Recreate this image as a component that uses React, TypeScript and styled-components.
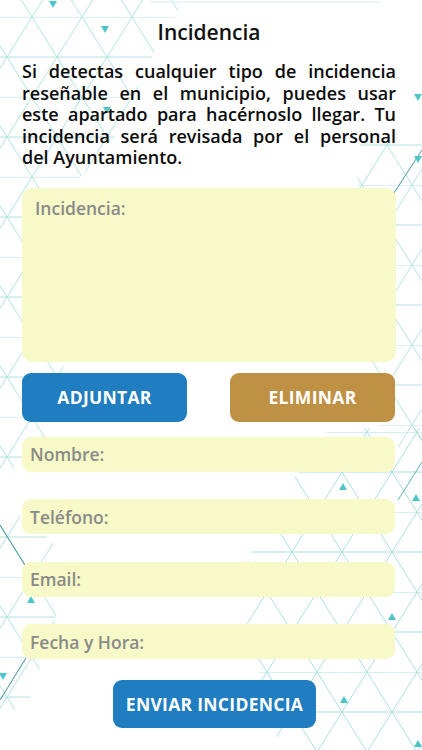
import React from "react";
import styled, { createGlobalStyle } from "styled-components";

const Global = createGlobalStyle`
  html, body { margin: 0; padding: 0; background: #ffffff; }
  body { font-family: "Open Sans", "Liberation Sans", sans-serif; }
  * { box-sizing: border-box; }
`;

const Page = styled.div`
  position: relative;
  width: 422px;
  height: 750px;
  overflow: hidden;
  background: #ffffff;
`;

const Backdrop = styled.svg`
  position: absolute;
  inset: 0;
  width: 422px;
  height: 750px;
  pointer-events: none;
`;

const Content = styled.div`
  position: relative;
  display: flex;
  flex-direction: column;
  padding: 19px 26px 0 22px;
`;

const Title = styled.h1`
  margin: 0;
  text-align: center;
  font-size: 21px;
  line-height: 26px;
  font-weight: 600;
  color: #111;
  padding-left: 0;
`;

const Intro = styled.div`
  margin-top: 16px;
  font-size: 18px;
  line-height: 21.5px;
  font-weight: 600;
  color: #0c0c0c;
`;

const Line = styled.span<{ $last?: boolean }>`
  display: block;
  white-space: nowrap;
  text-align: ${(p) => (p.$last ? "left" : "justify")};
  text-align-last: ${(p) => (p.$last ? "left" : "justify")};
`;

const TextBox = styled.div`
  margin-top: 19px;
  height: 174px;
  border-radius: 10px;
  background: #f7f9c8;
  padding: 8px 13px;
`;

const Label = styled.span`
  font-size: 17.5px;
  font-weight: 600;
  color: #8a8b88;
`;

const ButtonRow = styled.div`
  margin-top: 11px;
  display: flex;
  justify-content: space-between;
  padding-right: 1px;
`;

const Button = styled.div<{ $color: string; $w: number }>`
  width: ${(p) => p.$w}px;
  height: 49px;
  border-radius: 9px;
  background: ${(p) => p.$color};
  color: #ffffff;
  display: flex;
  align-items: center;
  justify-content: center;
  font-size: 17.5px;
  font-weight: 700;
  letter-spacing: 0.3px;
`;

const Fields = styled.div`
  margin-top: 15px;
  display: flex;
  flex-direction: column;
  gap: 27.5px;
  padding-right: 1px;
`;

const Field = styled.div`
  height: 35px;
  border-radius: 9px;
  background: #f7f9c8;
  display: flex;
  align-items: center;
  padding-left: 8px;
`;

const FieldLabel = styled.span`
  font-size: 17.5px;
  font-weight: 600;
  color: #8a8b88;
`;

const SendRow = styled.div`
  margin-top: 21px;
  display: flex;
  padding-left: 91px;
`;

const SendButton = styled(Button)`
  height: 48px;
`;

const Lattice: React.FC = () => {
  const tris: [number, number, boolean][] = [
    [53, 4, false],
    [105, 29, false],
    [107, 110, false],
    [418, 97, false],
    [418, 159, false],
    [343, 487, true],
    [416, 498, true],
    [31, 600, true],
    [392, 617, true],
    [344, 700, true],
    [418, 744, true],
    [3, 676, false],
  ];
  return (
    <Backdrop viewBox="0 0 422 750">
      <defs>
        <pattern id="latA" width="50" height="80" patternUnits="userSpaceOnUse" x="32" y="17">
          <path d="M0 0 L50 80 M50 0 L0 80 M0 0 H50 M0 40 H50" stroke="#b2e3e2" strokeWidth="1" fill="none" />
        </pattern>
        <pattern id="latB" width="50" height="80" patternUnits="userSpaceOnUse" x="17" y="32">
          <path d="M0 0 L50 80 M50 0 L0 80 M0 0 H50 M0 40 H50" stroke="#a8dfde" strokeWidth="1" fill="none" />
        </pattern>
        <pattern id="latC" width="50" height="80" patternUnits="userSpaceOnUse" x="12" y="25">
          <path d="M0 0 L50 80 M50 0 L0 80 M0 0 H50 M0 40 H50" stroke="#b2e3e2" strokeWidth="1" fill="none" />
        </pattern>
      </defs>
      <polygon points="0,0 185,0 150,60 120,130 70,190 60,460 0,470" fill="url(#latA)" />
      <polygon points="360,140 422,140 422,450 385,445 350,330" fill="url(#latC)" />
      <polygon points="330,428 422,428 422,750 280,750 250,640 240,580 265,520 300,470" fill="url(#latB)" />
      <polygon points="0,500 40,530 70,560 55,620 30,700 0,720" fill="url(#latA)" />
      <line x1="150" y1="2" x2="380" y2="2" stroke="#d5efee" strokeWidth="1" />
      <line x1="392" y1="196" x2="422" y2="150" stroke="#3e9c9d" strokeWidth="1" />
      <line x1="398" y1="500" x2="422" y2="462" stroke="#5db4b4" strokeWidth="1" />
      <line x1="0" y1="700" x2="26" y2="658" stroke="#3a8f93" strokeWidth="1" />
      <line x1="0" y1="525" x2="25" y2="565" stroke="#3a8f93" strokeWidth="1" />
      {tris.map(([x, y, up], i) => (
        <polygon
          key={i}
          points={
            up
              ? `${x - 4},${y + 3} ${x + 4},${y + 3} ${x},${y - 4}`
              : `${x - 4},${y - 3} ${x + 4},${y - 3} ${x},${y + 4}`
          }
          fill="#4ec5c7"
        />
      ))}
    </Backdrop>
  );
};

const fields = ["Nombre:", "Teléfono:", "Email:", "Fecha y Hora:"];

export default function App() {
  return (
    <Page>
      <Global />
      <Lattice />
      <Content>
        <Title>Incidencia</Title>
        <Intro>
          <Line>Si detectas cualquier tipo de incidencia</Line>
          <Line>reseñable en el municipio, puedes usar</Line>
          <Line>este apartado para hacérnoslo llegar. Tu</Line>
          <Line>incidencia será revisada por el personal</Line>
          <Line $last>del Ayuntamiento.</Line>
        </Intro>
        <TextBox>
          <Label>Incidencia:</Label>
        </TextBox>
        <ButtonRow>
          <Button $color="#1f7dc0" $w={165}>ADJUNTAR</Button>
          <Button $color="#bf9145" $w={165}>ELIMINAR</Button>
        </ButtonRow>
        <Fields>
          {fields.map((f) => (
            <Field key={f}>
              <FieldLabel>{f}</FieldLabel>
            </Field>
          ))}
        </Fields>
        <SendRow>
          <SendButton $color="#1f7dc0" $w={203}>ENVIAR INCIDENCIA</SendButton>
        </SendRow>
      </Content>
    </Page>
  );
}
